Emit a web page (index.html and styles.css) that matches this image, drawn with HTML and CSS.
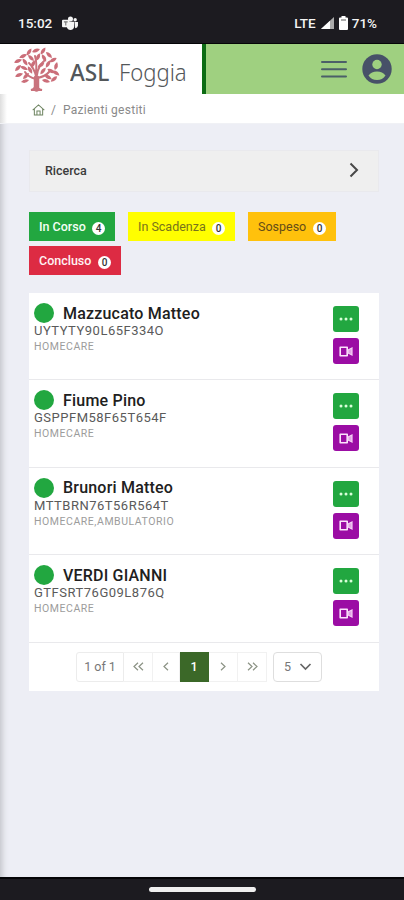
FILE: index.html
```html
<!DOCTYPE html>
<html lang="it">
<head>
<meta charset="utf-8">
<title>Pazienti gestiti</title>
<link rel="stylesheet" href="styles.css">
</head>
<body>
<svg width="0" height="0" class="defs">
  <defs>
    <g id="video"><path d="M1.200 1.200h7v8.600h-7z" fill="none" stroke="#fbe3fb" stroke-width="1.600" stroke-linejoin="round"/><path d="M9 4l4-2v7l-4-2z" fill="#e3a5e5" stroke="#f3d0f4" stroke-width="1.200"/></g>
    <g id="dots" fill="#d9ffd9"><circle cx="2" cy="2" r="1.500"/><circle cx="7" cy="2" r="1.500"/><circle cx="12" cy="2" r="1.500"/></g>
    <g id="leaf"><path d="M0-4.200Q3.600 0 0 4.200Q-3.400 0 0-4.200z"/></g>
  </defs>
</svg>
<div class="status">
  <span class="time">15:02</span>
  <svg class="teams" width="16" height="15" viewBox="0 0 17 16"><g fill="#f5f5f5"><circle cx="9" cy="3.200" r="2.700"/><circle cx="14" cy="4" r="1.800"/><path d="M5 6h8v5.500q-1 3.500-4 3.500t-4-3.500zM13.500 6.500H17v4q-.5 2.500-3 2.500z"/><rect x="0" y="4" width="8" height="8" rx="1"/></g><path d="M2 6.200h4M4 6.200v4" stroke="#777" stroke-width="1.200"/></svg>
  <span class="lte">LTE</span>
  <svg class="signal" width="13" height="12" viewBox="0 0 13 12"><path d="M0 12L13 0v12z" fill="#aaa"/><path d="M0 12l9-8.300V12z" fill="#fff"/></svg>
  <svg class="battery" width="9" height="14" viewBox="0 0 9 14"><path d="M2.500 0h4v1.500H8q1 0 1 1V13q0 1-1 1H1q-1 0-1-1V2.500q0-1 1-1h1.500z" fill="#fff"/><path d="M2 4h5" stroke="#777" stroke-width="1.200"/></svg>
  <span class="pct">71%</span>
</div>
<header class="top">
  <div class="brand">
    <svg class="tree" width="46" height="46" viewBox="0 0 46 46">
      <g fill="none" stroke="#c9737d" stroke-linecap="round"><path d="M22 43V29M22 33Q14 31 11 26M23 32Q31 31 36 25M22 30Q20 22 15 17M23 29Q24 20 31 14M22 26Q23 17 21 10" stroke-width="2"/><path d="M22.500 43V32" stroke-width="5.500"/><path d="M17 44q4-1 5-5q1 4 6 5z" stroke-width="2"/></g>
      <g fill="#cb6e79">
        <use href="#leaf" transform="translate(22 4.500) rotate(70)"/><use href="#leaf" transform="translate(15 6) rotate(35)"/><use href="#leaf" transform="translate(29 5) rotate(35)"/><use href="#leaf" transform="translate(35 9) rotate(-45)"/><use href="#leaf" transform="translate(9 10) rotate(65)"/><use href="#leaf" transform="translate(17 12) rotate(-45)"/><use href="#leaf" transform="translate(24 11) rotate(25)"/><use href="#leaf" transform="translate(30 12) rotate(-30)"/><use href="#leaf" transform="translate(39 14) rotate(60)"/><use href="#leaf" transform="translate(4 15) rotate(70)"/><use href="#leaf" transform="translate(11 16) rotate(-35)"/><use href="#leaf" transform="translate(19 18) rotate(25)"/><use href="#leaf" transform="translate(27 19) rotate(55)"/><use href="#leaf" transform="translate(34 18) rotate(30)"/><use href="#leaf" transform="translate(42 20) rotate(15)"/><use href="#leaf" transform="translate(4 22) rotate(45)"/><use href="#leaf" transform="translate(10 22) rotate(-65)"/><use href="#leaf" transform="translate(16 24) rotate(-30)"/><use href="#leaf" transform="translate(29 25) rotate(40)"/><use href="#leaf" transform="translate(37 25) rotate(-60)"/><use href="#leaf" transform="translate(42 27) rotate(-55)"/><use href="#leaf" transform="translate(5 29) rotate(70)"/><use href="#leaf" transform="translate(12 30) rotate(45)"/><use href="#leaf" transform="translate(34 31) rotate(-60)"/><use href="#leaf" transform="translate(40 33) rotate(50)"/><use href="#leaf" transform="translate(32 35) rotate(-75)"/><use href="#leaf" transform="translate(11 35) rotate(75)"/>
      </g>
    </svg>
    <span class="asl">ASL</span><span class="city">Foggia</span>
  </div>
  <svg class="menu" width="26" height="18" viewBox="0 0 26 18"><path d="M1 2h24M1 9.200h24M1 16.400h24" stroke="#4b5f68" stroke-width="2" stroke-linecap="round"/></svg>
  <svg class="user" width="30" height="30" viewBox="0 0 30 30"><circle cx="15" cy="15" r="14.700" fill="#475168"/><circle cx="15" cy="10.500" r="4.700" fill="#9fd080"/><path d="M6.500 21.500q3-4 8.500-4t8.500 4q-3 4.500-8.500 4.500t-8.500-4.500z" fill="#9fd080"/></svg>
</header>
<div class="page">
  <nav class="crumbs">
    <svg width="13" height="12" viewBox="0 0 14 13" fill="none" stroke="#6f8562" stroke-width="1.100"><path d="M.7 6.600L7 1l6.300 5.600M2.500 5.500V12h9V5.500M5.300 12V7.700h3.400V12"/></svg>
    <span class="sep">/</span><span class="here">Pazienti gestiti</span>
  </nav>
  <main>
    <section class="search"><span>Ricerca</span><svg width="10" height="16" viewBox="0 0 10 16"><path d="M1.500 1.500L8 8l-6.500 6.500" fill="none" stroke="#484848" stroke-width="2"/></svg></section>
    <div class="tags">
      <div class="tag green"><span>In Corso</span><b>4</b></div>
      <div class="tag yellow"><span>In Scadenza</span><b>0</b></div>
      <div class="tag orange"><span>Sospeso</span><b>0</b></div>
      <div class="tag red"><span>Concluso</span><b>0</b></div>
    </div>
    <section class="card">
      <article class="row"><div class="info"><h2><i></i><span>Mazzucato Matteo</span></h2><p class="code">UYTYTY90L65F334O</p><p class="kind">HOMECARE</p></div><div class="acts"><span class="btn"><svg width="14" height="4"><use href="#dots"/></svg></span><span class="btn purple"><svg width="14" height="11"><use href="#video"/></svg></span></div></article>
      <article class="row"><div class="info"><h2><i></i><span>Fiume Pino</span></h2><p class="code">GSPPFM58F65T654F</p><p class="kind">HOMECARE</p></div><div class="acts"><span class="btn"><svg width="14" height="4"><use href="#dots"/></svg></span><span class="btn purple"><svg width="14" height="11"><use href="#video"/></svg></span></div></article>
      <article class="row"><div class="info"><h2><i></i><span>Brunori Matteo</span></h2><p class="code">MTTBRN76T56R564T</p><p class="kind">HOMECARE,AMBULATORIO</p></div><div class="acts"><span class="btn"><svg width="14" height="4"><use href="#dots"/></svg></span><span class="btn purple"><svg width="14" height="11"><use href="#video"/></svg></span></div></article>
      <article class="row"><div class="info"><h2><i></i><span>VERDI GIANNI</span></h2><p class="code">GTFSRT76G09L876Q</p><p class="kind">HOMECARE</p></div><div class="acts"><span class="btn"><svg width="14" height="4"><use href="#dots"/></svg></span><span class="btn purple"><svg width="14" height="11"><use href="#video"/></svg></span></div></article>
      <div class="pager">
        <span class="pg count">1 of 1</span>
        <span class="pg"><svg width="11" height="9"><path d="M5 .8L1 4.500l4 3.700M10 .8L6 4.500l4 3.700"/></svg></span>
        <span class="pg prev"><svg width="6" height="9"><path d="M5 .8L1 4.500l4 3.700"/></svg></span>
        <span class="pg on">1</span>
        <span class="pg"><svg width="6" height="9"><path d="M1 .8l4 3.700-4 3.700"/></svg></span>
        <span class="pg last"><svg width="11" height="9"><path d="M1 .8l4 3.700-4 3.700M6 .8l4 3.700-4 3.700"/></svg></span>
        <span class="size">5<svg width="13" height="8"><path d="M1.500 1l5 5 5-5"/></svg></span>
      </div>
    </section>
  </main>
</div>
<footer class="gesture"><span></span></footer>
</body>
</html>
```

FILE: styles.css
```css
* { box-sizing: border-box; }
body { margin: 0; width: 404px; height: 900px; display: flex; flex-direction: column; overflow: hidden; font-family: Roboto, sans-serif; background: #edeef5; color: #444; }
svg { display: block; flex: none; }
.defs { position: absolute; }
.status { height: 44px; flex: none; background: #1c1b20; border-bottom: 1px solid #050507; display: flex; align-items: center; padding: 3px 27px 0 18px; color: #f4f4f4; font-size: 13.5px; font-weight: 500; }
.teams { margin-left: 10px; }
.lte { margin-left: auto; }
.signal { margin-left: 5px; }
.battery { margin: 0 4px 0 5px; }
.top { height: 50px; flex: none; background: #9fd080; display: flex; align-items: center; }
.brand { width: 206px; height: 50px; background: #fff; border-right: 4px solid #0c6b14; display: flex; align-items: center; padding-left: 14px; color: #53575a; line-height: 30px; white-space: nowrap; font-family: "Noto Sans", sans-serif; }
.asl, .city { flex: none; margin-top: 6px; transform-origin: left center; }
.asl { width: 49px; margin-left: 10px; font-weight: 500; font-size: 24px; transform: scaleX(.94); }
.city { font-weight: 300; font-size: 24px; transform: scaleX(.92); }
.menu { margin-left: 115px; }
.user { margin-left: 15px; }
.page { flex: 1; box-shadow: inset 7px 0 6px -5px #bfc0c6; display: flex; flex-direction: column; }
.crumbs { height: 30px; background: linear-gradient(90deg, #dedede 0, #fff 7px); border-bottom: 1px solid #f0f1f5; display: flex; align-items: center; padding: 2px 0 0 32px; font-size: 12px; color: #8a8a8a; }
.here { letter-spacing: .27px; }
.sep { margin: 0 7px 0 6px; }
main { padding: 26px 25px 0 29px; }
.search { width: 349.5px; height: 42px; background: #efefef; border: 1px solid #e9e9ed; display: flex; align-items: center; justify-content: space-between; padding: 0 19px 2px 15px; font-size: 12.5px; font-weight: 500; color: #3b3b3b; }
.tags { margin-top: 20px; display: flex; flex-wrap: wrap; gap: 5px 13px; }
.tag { height: 29px; width: 86px; display: flex; align-items: center; justify-content: space-between; padding: 0 10px; font-size: 12.5px; white-space: nowrap; }
.tag b { width: 13px; height: 13px; margin-top: 3px; border-radius: 50%; background: #fff; color: #333; font-size: 10px; line-height: 13px; text-align: center; font-weight: 500; }
.green { background: #22a740; color: #f4fff4; font-weight: 500; }
.yellow { background: #fffe00; color: #77731c; width: 107px; }
.orange { background: #ffc10c; color: #644c18; width: 88px; }
.red { background: #dd2b43; color: #fff2f3; width: 92px; font-weight: 500; }
.card { margin-top: 18px; width: 349.5px; height: 398px; background: #fff; }
.row { height: 87.4px; border-bottom: 1px solid #e9e9ec; display: flex; justify-content: space-between; padding: 11px 20px 0 5px; }
h2 { margin: 0; display: flex; align-items: center; gap: 9px; height: 18px; font-size: 16px; font-weight: 500; letter-spacing: .2px; color: #202020; white-space: nowrap; }
h2 i { width: 20px; height: 20px; border-radius: 50%; background: #22a740; }
p { margin: 0; white-space: nowrap; }
.code { font-size: 13px; line-height: 17px; letter-spacing: .5px; color: #5a5a5a; }
.kind { font-size: 10.5px; line-height: 15px; letter-spacing: .55px; color: #9c9c9c; }
.acts { display: flex; flex-direction: column; gap: 6px; padding-top: 2px; }
.btn { width: 25.5px; height: 26px; border-radius: 3px; background: #22a740; display: flex; align-items: center; justify-content: center; }
.purple { background: #9b0da4; }
.pager { height: 48px; display: flex; align-items: center; padding-left: 47px; font-size: 12.5px; color: #777; }
.pg { width: 29px; height: 30px; flex: none; border: 1px solid #f1f1f1; border-left: 0; display: flex; align-items: center; justify-content: center; }
.count { width: 48px; border: 1px solid #ececec; border-radius: 3px 0 0 3px; }
.prev { width: 27px; }
.pg path, .size path { fill: none; stroke: #8b9284; stroke-width: 1.2; }
.on { background: #3b6828; border-color: #3b6828; color: #fff; font-weight: 500; }
.size { width: 49px; height: 30px; margin-left: 6px; border: 1px solid #dedede; border-radius: 4px; display: flex; align-items: center; justify-content: space-between; padding: 0 9px 0 10px; }
.size path { stroke: #666; stroke-width: 1.7; }
.gesture { height: 23px; flex: none; background: #1c1b20; border-top: 2px solid #050507; display: flex; justify-content: center; align-items: center; }
.gesture span { width: 107px; height: 5px; border-radius: 3px; background: #efefef; }
```
